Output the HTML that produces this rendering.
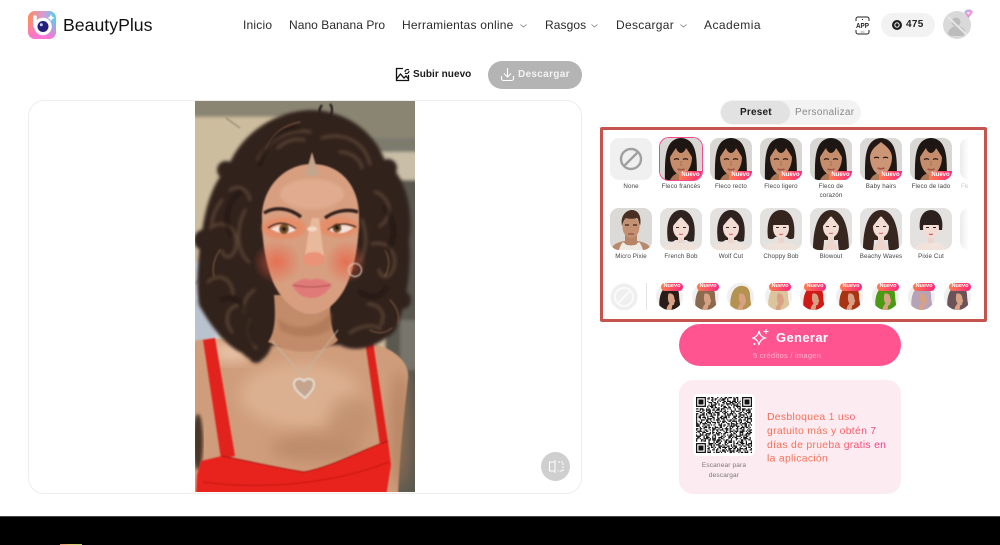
<!DOCTYPE html>
<html lang="es"><head><meta charset="utf-8"><title>BeautyPlus</title>
<style>
*{box-sizing:border-box}
html,body{margin:0;padding:0;width:1000px;height:545px;overflow:hidden;background:#fff;font-family:"Liberation Sans",sans-serif;color:#222}
.a{position:absolute;white-space:nowrap}
.nav{top:18px;font-size:12px;line-height:14px;color:#2a2a2a;letter-spacing:.25px}
.lb{width:44px;text-align:center;font-size:6.2px;line-height:8.5px;color:#444;letter-spacing:.12px;white-space:normal}
.th{position:absolute;width:42px;height:42px;border-radius:9px;overflow:hidden;background:#e4e3e1}
.th svg{display:block;width:42px;height:42px;filter:blur(.35px)}
.bd{position:absolute;right:0;bottom:0;width:23px;height:9px;border-radius:5px 0 0 0;background:linear-gradient(90deg,#ff7a4d,#f8287f);color:#fff;font-size:6px;line-height:9px;font-weight:bold;text-align:center}
.ci{position:absolute;top:283px;width:27px;height:27px;border-radius:50%;overflow:hidden;background:#f1f0ef}
.ci svg{display:block;width:27px;height:27px;filter:blur(.3px)}
.pb{position:absolute;top:283px;width:22px;height:7.5px;border-radius:4px;background:linear-gradient(90deg,#ff7a4d,#f8287f);color:#fff;font-size:5.6px;line-height:7.5px;font-weight:bold;text-align:center}
.chev{position:absolute;top:24px;width:7px;height:4px}
</style></head><body>

<svg width="0" height="0" style="position:absolute">
<defs>
<symbol id="fringe" viewBox="0 0 42 42">
<rect width="42" height="42" fill="#d9d7d4"/>
<path d="M5 42C5 22 4 1 21 0c17 1 16 22 16 42z" fill="#1e1613"/>
<path d="M10 42c2-4 5-6 8-7v-6h8v6c3 1 6 3 8 7z" fill="#ad7656"/>
<path d="M10 19c0 9 5 18 11 18s11-9 11-18S27 6 21 6 10 10 10 19z" fill="#c58d6c"/>
<path d="M9 21C9 8 16 4 21 4s12 4 12 17c-2-4-5-8-7-11-1 3-3 5-5 5s-4-2-5-5c-2 3-5 7-7 11z" fill="#1e1613"/>
<path d="M14 21.500q2.500-1.500 5 0M23 21.500q2.500-1.500 5 0" fill="none" stroke="#241510" stroke-width="1.200"/>
<path d="M21 23v5" stroke="#a96f50" stroke-width="1"/>
<path d="M17.500 31q3.500 1.500 7 0" stroke="#a5524a" stroke-width="1.500" fill="none"/>
</symbol>
<symbol id="part" viewBox="0 0 42 42">
<rect width="42" height="42" fill="#dbd9d6"/>
<path d="M5 42C5 22 4 1 21 0c17 1 16 22 16 42z" fill="#211714"/>
<path d="M10 42c2-4 5-6 8-7v-6h8v6c3 1 6 3 8 7z" fill="#b07a5b"/>
<path d="M10 19C11 10 18 7 21 4c3 3 10 6 11 15 0 9-5 18-11 18S10 28 10 19z" fill="#cb9576"/>
<path d="M14 20q2.500-1.500 5 0M23 20q2.500-1.500 5 0" fill="none" stroke="#241510" stroke-width="1.200"/>
<path d="M17.500 30q3.500 1.500 7 0" stroke="#a5524a" stroke-width="1.500" fill="none"/>
</symbol>
<symbol id="bob" viewBox="0 0 42 42">
<rect width="42" height="42" fill="#e3e2e0"/>
<path d="M2 42c2-6 12-8 19-8s17 2 19 8z" fill="#efe2db"/>
<path d="M8 33C5 14 11 2 21 2s16 12 13 31c-3 1-6 1-7-1H15c-1 2-4 2-7 1z" fill="#2f2320"/>
<rect x="18" y="26" width="6" height="9" fill="#ecd5cb"/>
<ellipse cx="21" cy="20" rx="8" ry="10.500" fill="#f3dcd4"/>
<path d="M13 18C13 9 17 7 21 6s8 3 8 12c-3-4-6-7-8-9-2 2-5 5-8 9z" fill="#2f2320"/>
<path d="M16 19.500h3M23 19.500h3" stroke="#3b2b28" stroke-width=".9"/><path d="M19 26q2 1 4 0" stroke="#cf6b72" stroke-width="1.200" fill="none"/>
</symbol>
<symbol id="bang" viewBox="0 0 42 42">
<rect width="42" height="42" fill="#e3e2e0"/>
<path d="M2 42c2-6 12-8 19-8s17 2 19 8z" fill="#efe2db"/>
<path d="M8 30C6 13 11 2 21 2s15 11 13 28c-3 2-6 1-7-1H15c-1 2-4 3-7 1z" fill="#35251f"/>
<rect x="18" y="26" width="6" height="9" fill="#ecd5cb"/>
<ellipse cx="21" cy="20" rx="8" ry="10.500" fill="#f3dcd4"/>
<path d="M13 17C13 9 16 6 21 6s8 3 8 11z" fill="#35251f"/>
<path d="M16 19.500h3M23 19.500h3" stroke="#3b2b28" stroke-width=".9"/><path d="M19 26q2 1 4 0" stroke="#cf6b72" stroke-width="1.200" fill="none"/>
</symbol>
<symbol id="long" viewBox="0 0 42 42">
<rect width="42" height="42" fill="#e3e2e0"/>
<path d="M3 42C3 24 7 2 21 2s18 22 18 40H29c-1-6-1-9-1-10H14c0 1 0 4-1 10z" fill="#37261f"/>
<path d="M14 42c1-5 3-6 4-8v-6h6v6c1 2 3 3 4 8z" fill="#efd6cc"/>
<ellipse cx="21" cy="19" rx="8" ry="10.500" fill="#f3dcd4"/>
<path d="M13 18C13 9 18 7 21 5c3 2 8 4 8 13-3-4-6-8-8-10-2 2-5 6-8 10z" fill="#37261f"/>
<path d="M16 18.500h3M23 18.500h3" stroke="#3b2b28" stroke-width=".9"/><path d="M19 25q2 1 4 0" stroke="#cf6b72" stroke-width="1.200" fill="none"/>
</symbol>
<symbol id="man" viewBox="0 0 42 42">
<rect width="42" height="42" fill="#dcdad6"/>
<path d="M1 42c1-6 8-8 13-9h14c5 1 12 3 13 9z" fill="#b88a6d"/>
<path d="M9 42c1-4 3-7 4-8l4 3h8l4-3c1 1 3 4 4 8z" fill="#eee9e2"/>
<path d="M15 36V24h12v12q-6 3-12 0z" fill="#b88466"/>
<ellipse cx="21" cy="19" rx="8.500" ry="11" fill="#c49072"/>
<path d="M12 18C10 8 16 2 22 2s10 6 8 16c-1-4-2-7-3-8-4 1-8 1-11 0-2 2-3 4-4 8z" fill="#4a3024"/>
<path d="M15 17h4M23 17h4" stroke="#3a241c" stroke-width="1.200"/><path d="M18 26h6" stroke="#8d4f40" stroke-width="1.200"/>
</symbol>
<symbol id="side" viewBox="0 0 28 28">
<rect width="28" height="28" fill="#f1f0ef"/>
<path d="M4 28C2 17 5 3 15 3c7 0 9 5 9 11 0 5 2 10 1 14z" fill="currentColor"/>
<path d="M11 28c0-4 2-5 3-7-2-2-2-7-1-10 3-1 6 1 6 5l1 3-1 1c0 2 0 3-2 3l-1 5z" fill="#d9a183"/>
</symbol>
<linearGradient id="lg" x1="0" y1="0" x2="1" y2="0"><stop offset="0" stop-color="#ff8a5c"/><stop offset=".55" stop-color="#d69ad8"/><stop offset="1" stop-color="#4fd0ee"/></linearGradient>
<linearGradient id="lgo" x1="0" y1="0" x2="0" y2="1"><stop offset=".35" stop-color="#ff6fd0" stop-opacity="0"/><stop offset="1" stop-color="#ff74d8"/></linearGradient>
<linearGradient id="lgd" x1="0" y1="0" x2="1" y2="1"><stop offset="0" stop-color="#6fd0ff"/><stop offset=".5" stop-color="#ff8fd0"/><stop offset="1" stop-color="#9f8cff"/></linearGradient>
<radialGradient id="blush" cx=".5" cy=".5" r=".5"><stop offset="0" stop-color="#ec5c40" stop-opacity=".7"/><stop offset="1" stop-color="#ec5c40" stop-opacity="0"/></radialGradient>
<filter id="s1" x="-10%" y="-10%" width="120%" height="120%"><feGaussianBlur stdDeviation=".7"/></filter>
<filter id="s2" x="-10%" y="-10%" width="120%" height="120%"><feGaussianBlur stdDeviation="1.500"/></filter>
<filter id="s3" x="-30%" y="-30%" width="160%" height="160%"><feGaussianBlur stdDeviation="7"/></filter>
</defs></svg>

<!-- logo -->
<svg class="a" style="left:28px;top:11px" width="28" height="28" viewBox="0 0 28 28">
<rect width="28" height="28" rx="7" fill="url(#lg)"/><rect width="28" height="28" rx="7" fill="url(#lgo)"/>
<path d="M7 6v9" stroke="#fff" stroke-width="3.500" stroke-linecap="round"/>
<circle cx="15" cy="15.500" r="8.800" fill="#fff"/><circle cx="15" cy="15.500" r="5.500" fill="#26207c"/><circle cx="13.300" cy="13.800" r="1.500" fill="#cfd0f5"/>
<path d="M23 3l1 2.500L26.500 7 24 8 23 10.500 22 8 19.500 7 22 5.500z" fill="#fff"/>
</svg>
<div class="a" style="left:63px;top:14px;font-size:17.700px;line-height:22px;color:#111;font-weight:500">BeautyPlus</div>

<!-- nav -->
<div class="a nav" style="left:243px;letter-spacing:.2px">Inicio</div>
<div class="a nav" style="left:289px;letter-spacing:.05px">Nano Banana Pro</div>
<div class="a nav" style="left:402px;letter-spacing:.22px">Herramientas online</div>
<svg class="chev" style="left:520px" viewBox="0 0 7 4"><path d="M.5.5l3 2.500 3-2.500" fill="none" stroke="#777" stroke-width=".8"/></svg>
<div class="a nav" style="left:545px;letter-spacing:.1px">Rasgos</div>
<svg class="chev" style="left:591px" viewBox="0 0 7 4"><path d="M.5.5l3 2.500 3-2.500" fill="none" stroke="#777" stroke-width=".8"/></svg>
<div class="a nav" style="left:616px;letter-spacing:.3px">Descargar</div>
<svg class="chev" style="left:680px" viewBox="0 0 7 4"><path d="M.5.500l3 2.500 3-2.500" fill="none" stroke="#777" stroke-width=".8"/></svg>
<div class="a nav" style="left:704px;letter-spacing:.45px">Academia</div>

<!-- app icon -->
<svg class="a" style="left:855px;top:16px" width="15" height="19" viewBox="0 0 15 19">
<path d="M1 5V3a2 2 0 0 1 2-2h9a2 2 0 0 1 2 2v2M1 14v2a2 2 0 0 0 2 2h9a2 2 0 0 0 2-2v-2" fill="none" stroke="#222" stroke-width="1"/>
<circle cx="7.500" cy="3.500" r=".6" fill="#222"/><rect x="5.500" y="15.600" width="4" height=".8" fill="#888"/>
<text x="1" y="12" textLength="13" lengthAdjust="spacingAndGlyphs" font-family="Liberation Sans" font-weight="bold" font-size="7" fill="#222">APP</text></svg>
<!-- credits -->
<div class="a" style="left:881px;top:13px;width:54px;height:24px;border-radius:12px;background:#f2f2f2"></div>
<svg class="a" style="left:892px;top:20px" width="10" height="10" viewBox="0 0 10 10"><circle cx="5" cy="5" r="5" fill="#1d1d1d"/><circle cx="5" cy="5" r="2.200" fill="none" stroke="#fff" stroke-width="1"/></svg>
<div class="a" style="left:906px;top:18px;font-size:10px;line-height:13px;font-weight:bold;color:#222;letter-spacing:.3px">475</div>
<!-- avatar -->
<svg class="a" style="left:942px;top:9px" width="32" height="31" viewBox="0 0 32 31">
<circle cx="15" cy="16" r="14" fill="#d9d9d9"/><circle cx="14" cy="13" r="4.500" fill="#bcbcbc"/><path d="M6 25c0-5 5-8 9-8s8 3 9 7l-3 3H9z" fill="#bcbcbc"/><path d="M6 8l19 18" stroke="#e6e6e6" stroke-width="2"/>
<path d="M22 3l3-2.500h3.500L31 3l-4.500 6z" fill="url(#lgd)"/><path d="M24.500 3h4l-2 3z" fill="#fff" opacity=".7"/></svg>

<!-- upload -->
<svg class="a" style="left:395px;top:67px" width="15" height="15" viewBox="0 0 15 15">
<path d="M8 1.500H1.500v12h12V8" fill="none" stroke="#111" stroke-width="1.300"/><path d="M1.500 12l4-5 3.500 4 2-2 2.500 3" fill="none" stroke="#111" stroke-width="1.300"/><path d="M10 5a2.500 2.500 0 0 1 4-2M14 4a2.500 2.500 0 0 1-4 2" fill="none" stroke="#111" stroke-width="1.100"/></svg>
<div class="a" style="left:413px;top:68px;font-size:10px;line-height:13px;font-weight:bold;color:#1a1a1a;letter-spacing:.05px">Subir nuevo</div>
<!-- download -->
<div class="a" style="left:488px;top:61px;width:94px;height:28px;border-radius:14px;background:#b4b4b4"></div>
<svg class="a" style="left:500px;top:67px" width="15" height="15" viewBox="0 0 15 15"><path d="M7.500 1v8.500M4 6.500l3.500 3.500L11 6.500M1.500 9v2.500a2 2 0 0 0 2 2h8a2 2 0 0 0 2-2V9" fill="none" stroke="#fff" stroke-width="1.100"/></svg>
<div class="a" style="left:518px;top:68px;font-size:10px;line-height:13px;font-weight:bold;color:#f3f3f3;letter-spacing:.32px">Descargar</div>

<!-- photo card -->
<div class="a" style="left:28px;top:100px;width:554px;height:394px;border:1px solid #ededed;border-radius:16px;background:#fff"></div>
<div class="a" style="left:195px;top:101px;width:220px;height:391px;overflow:hidden;background:#cdbd9f">
<svg width="220" height="391" viewBox="195 101 220 391" style="display:block">
<!-- background -->
<g filter="url(#s2)">
<rect x="185" y="95" width="240" height="405" fill="#cdbd9f"/>
<path d="M185 95h240v50l-80-4-60-24-100 0z" fill="#8a8573"/>
<rect x="360" y="138" width="65" height="14" fill="#7d7a6e"/>
<rect x="360" y="152" width="65" height="28" fill="#c9bfa8"/>
<rect x="385" y="180" width="40" height="320" fill="#5a5850"/>
<rect x="400" y="320" width="25" height="50" fill="#77746c"/>
<path d="M185 262h35v90h-35z" fill="#c9cfd8"/>
<path d="M185 300h30v50h-30z" fill="#b9c2cf"/>
</g>
<!-- body -->
<g filter="url(#s1)">
<path d="M190 342c15-5 40-3 60 0h100c10-2 22 0 28 3 18 6 32 18 30 34-4 35-8 75-10 115H190z" fill="#cf9d7b"/>
</g>
<ellipse cx="300" cy="395" rx="60" ry="32" fill="#dfb595" opacity=".8" filter="url(#s3)"/>
<ellipse cx="232" cy="352" rx="22" ry="10" fill="#ecc9ad" opacity=".9" filter="url(#s3)"/>
<ellipse cx="315" cy="448" rx="45" ry="14" fill="#b98868" opacity=".8" filter="url(#s3)"/>
<ellipse cx="350" cy="420" rx="22" ry="25" fill="#bb8a68" opacity=".6" filter="url(#s3)"/>
<ellipse cx="198" cy="442" rx="5" ry="28" fill="#4a3525" filter="url(#s2)"/>
<ellipse cx="400" cy="430" rx="10" ry="60" fill="#a87755" opacity=".6" filter="url(#s3)"/>
<!-- straps and dress -->
<g filter="url(#s1)">
<path d="M203 340l12-2 20 118-14 3z" fill="#e2211e"/>
<path d="M365 341l8 1 15 100-8 3z" fill="#dd211d"/>
<path d="M222 456c25 5 60 13 82 16 28-5 58-22 84-31l3 24-5 32H196l1-22 4-14z" fill="#e8211e"/>
<path d="M222 456c25 5 60 13 82 16 28-5 58-22 84-31" fill="none" stroke="#a5140f" stroke-width="1"/>
<path d="M203 482c60 8 130 2 186-20" fill="none" stroke="#c4120f" stroke-width="1"/>
</g>
<!-- hair -->
<g fill="#30241f" filter="url(#s2)">
<path d="M300 111c38-6 74 18 85 50 20 14 29 48 24 80 3 30-4 68-14 90-20 18-40 22-55 14h-68c-8 22-20 18-30 8-18-8-33-30-43-48-4-26 0-54 4-80 5-28 13-46 26-60 12-30 42-50 71-54z"/>
<circle cx="226" cy="170" r="9"/><circle cx="388" cy="168" r="9"/><circle cx="205" cy="240" r="11"/><circle cx="402" cy="300" r="9"/><circle cx="256" cy="356" r="7"/>
</g>
<g fill="none" stroke="#5f4839" stroke-width="3" stroke-linecap="round" filter="url(#s2)" opacity=".85">
<path d="M258 160c10-22 34-32 52-28"/><path d="M322 138c20-6 42 2 48 26"/><path d="M230 190c10-6 18 0 20 10"/>
<path d="M210 228c14-10 28 0 26 18-2 13-12 14-14 5"/><path d="M208 282c10-10 24-4 25 12"/><path d="M232 332c-8-10-6-24 6-27"/>
<path d="M375 192c15 4 20 24 5 34"/><path d="M372 244c18-5 28 14 20 28-4 7-11 6-13-2"/><path d="M368 304c10 0 19 8 13 21"/>
<path d="M245 210c-10 20-8 42 4 52"/><path d="M278 148c8-8 18-10 26-8"/><path d="M340 152c10 0 20 6 22 16"/><path d="M350 333c10-8 24-9 30-4"/><path d="M250 320c-4 10-2 22 6 28"/>
<path d="M362 220c6 16 4 30-2 42"/><path d="M222 200c-6 8-10 16-10 24"/><path d="M254 290c-8 6-12 14-10 22"/>
</g>
<g fill="none" stroke="#8a654a" stroke-width="1.400" stroke-linecap="round" filter="url(#s1)" opacity=".65">
<path d="M390 300c6 6 10 14 8 24"/><path d="M370 330c8 4 14 4 22-2"/><path d="M220 250c-6 8-8 18-6 26"/><path d="M300 122c-16 3-28 12-34 26"/><path d="M385 250c5 8 5 18 0 26"/>
</g>
<g fill="none" stroke="#15100d" stroke-width="2.500" stroke-linecap="round" filter="url(#s2)" opacity=".7">
<path d="M240 192c-13 10-17 28-9 42"/><path d="M385 208c11 15 11 32 2 42"/><path d="M222 300c10-5 20 0 22 11"/><path d="M360 292c11 7 20 6 26-4"/><path d="M298 128c-20 2-34 16-38 36"/><path d="M252 345c-4-8-5-17-2-24"/>
</g>
<path d="M322 105c-5 6-2 13 5 15 5-4 7-11 3-16" fill="none" stroke="#2b201b" stroke-width="2.500" filter="url(#s1)"/>
<path d="M240 128l-14-10M210 270c-8 6-12 8-14 14M197 240c6-3 10-3 14 0" fill="none" stroke="#3a2c24" stroke-width="1" filter="url(#s1)" opacity=".5"/>
<!-- neck -->
<path d="M274 295c2 22 1 38-6 47l10 4c20 10 50 6 60-6-8-10-9-28-7-45z" fill="#c28c6a" filter="url(#s1)"/>
<path d="M278 318c15 14 38 12 54-6l-2 18c-18 10-36 8-50 0z" fill="#a8714f" opacity=".6" filter="url(#s2)"/>
<!-- face -->
<g filter="url(#s1)">
<path d="M262 220c-1-32 22-56 50-56 30 0 48 24 47 54 0 24-4 48-12 66-8 18-22 30-36 30-15 0-30-14-38-32-7-18-11-40-11-62z" fill="#d79e80"/>
<path d="M312 152l-7 24 14 0z" fill="#c5a48c"/>
</g>
<ellipse cx="312" cy="194" rx="32" ry="15" fill="#e6b598" opacity=".6" filter="url(#s2)"/>
<ellipse cx="277" cy="262" rx="24" ry="22" fill="url(#blush)"/>
<ellipse cx="346" cy="262" rx="21" ry="22" fill="url(#blush)"/>
<ellipse cx="284" cy="228" rx="22" ry="11" fill="#e98a64" opacity=".8" filter="url(#s2)"/>
<ellipse cx="338" cy="227" rx="20" ry="10" fill="#e98a64" opacity=".8" filter="url(#s2)"/>
<g filter="url(#s1)">
<path d="M312 218c-5 16-5 30-8 42 3 7 16 8 21 0-3-14-4-28-6-42z" fill="#eebf a4" opacity="0"/>
<path d="M312 218c-5 16-5 30-8 42 3 7 16 8 21 0-3-14-4-28-6-42z" fill="#eebfa4" opacity=".8"/>
<ellipse cx="312" cy="229" rx="5" ry="2.500" fill="#f3d8c4"/>
<ellipse cx="314" cy="259" rx="11" ry="7" fill="#ea8f74" opacity=".9"/>
<path d="M264 213c11-7 26-5 37 4" fill="none" stroke="#35241c" stroke-width="3.400"/>
<path d="M325 218c8-6 21-10 33-6" fill="none" stroke="#35241c" stroke-width="3.400"/>
<path d="M271 229q12-8 25 1-12 7-25-1z" fill="#f4e3dd"/><path d="M329 230q12-8 24-2-11 9-24 2z" fill="#f4e3dd"/>
<circle cx="284" cy="229" r="5" fill="#74502a"/><circle cx="284" cy="229" r="2" fill="#1f130c"/>
<circle cx="337" cy="228" r="4.600" fill="#74502a"/><circle cx="337" cy="228" r="2" fill="#1f130c"/>
<path d="M268 228q14-10 28 1M328 230q12-10 28-3" fill="none" stroke="#2a1a12" stroke-width="1.300"/>
<path d="M292 285c6-4 11-7 16-6 3 1 4 1 6 0 6-1 12 2 18 6-6 9-13 13-21 13s-14-4-19-13z" fill="#e07a78"/>
<path d="M293 285q18 4 37 0" fill="none" stroke="#a84a4a" stroke-width="1"/>
<circle cx="355" cy="270" r="6.500" fill="none" stroke="#d4c8b5" stroke-width="1.200"/>
<path d="M272 341l31 35 35-46" fill="none" stroke="#c3b6a6" stroke-width="1"/>
<path d="M305 398c-6-5-11-9-11-14s6-7 10-3c4-4 10-2 10 3s-4 9-9 14z" fill="#c5a48e" stroke="#e5dfd6" stroke-width="1.800"/>
</g>
</svg></div>
<!-- compare btn -->
<div class="a" style="left:541px;top:452px;width:29px;height:29px;border-radius:50%;background:#cfcfcf"></div>
<svg class="a" style="left:548px;top:460px" width="16" height="13" viewBox="0 0 16 13"><path d="M7 2H1.500v9H7M7 0v13" fill="none" stroke="#fff" stroke-width="1"/><path d="M10 2h5v9h-5" fill="none" stroke="#fff" stroke-width="1" stroke-dasharray="2 1"/></svg>

<!-- tabs -->
<div class="a" style="left:720px;top:100px;width:141px;height:25px;border-radius:12.500px;background:#f3f3f3"></div>
<div class="a" style="left:721px;top:101px;width:69px;height:23px;border-radius:11.500px;background:#e2e2e2"></div>
<div class="a" style="left:740px;top:106px;font-size:10px;line-height:13px;font-weight:bold;color:#1b1b1b;letter-spacing:.2px">Preset</div>
<div class="a" style="left:795px;top:106px;font-size:10px;line-height:13px;color:#8a8a8a;letter-spacing:.32px">Personalizar</div>

<!-- red frame -->
<div class="a" style="left:600px;top:127px;width:387px;height:195px;border:3px solid #c5534e;border-radius:2px"></div>

<!-- Row 1 -->
<div class="th" style="left:610px;top:138px;background:#f0f0f0"><svg viewBox="0 0 42 42"><circle cx="21" cy="21" r="10" fill="none" stroke="#a0a0a0" stroke-width="2.400"/><path d="M14 28L28 14" stroke="#a0a0a0" stroke-width="2.400"/></svg></div>
<div class="th" style="left:660px;top:138px;box-shadow:0 0 0 1px #f5488c"><svg><use href="#fringe"/></svg><div class="bd">Nuevo</div></div>
<div class="th" style="left:710px;top:138px"><svg><use href="#fringe"/></svg><div class="bd">Nuevo</div></div>
<div class="th" style="left:760px;top:138px"><svg><use href="#fringe"/></svg><div class="bd">Nuevo</div></div>
<div class="th" style="left:810px;top:138px"><svg><use href="#fringe"/></svg><div class="bd">Nuevo</div></div>
<div class="th" style="left:860px;top:138px"><svg><use href="#part"/></svg><div class="bd">Nuevo</div></div>
<div class="th" style="left:910px;top:138px"><svg><use href="#fringe"/></svg><div class="bd">Nuevo</div></div>
<div class="th" style="left:960px;top:138px;width:9px;border-radius:9px 0 0 9px;background:linear-gradient(90deg,#ececec,#fff)"></div>

<div class="a lb" style="left:609px;top:183px">None</div>
<div class="a lb" style="left:659px;top:183px">Fleco francés</div>
<div class="a lb" style="left:709px;top:183px">Fleco recto</div>
<div class="a lb" style="left:759px;top:183px">Fleco ligero</div>
<div class="a lb" style="left:809px;top:183px">Fleco de corazón</div>
<div class="a lb" style="left:859px;top:183px">Baby hairs</div>
<div class="a lb" style="left:909px;top:183px">Fleco de lado</div>
<div class="a" style="left:961px;top:183px;font-size:6.200px;line-height:8.500px;color:#ccc;width:7px;overflow:hidden">Fleco</div>

<!-- Row 2 -->
<div class="th" style="left:610px;top:208px"><svg><use href="#man"/></svg></div>
<div class="th" style="left:660px;top:208px"><svg><use href="#bob"/></svg></div>
<div class="th" style="left:710px;top:208px"><svg><use href="#bob"/></svg></div>
<div class="th" style="left:760px;top:208px"><svg><use href="#bang"/></svg></div>
<div class="th" style="left:810px;top:208px"><svg><use href="#long"/></svg></div>
<div class="th" style="left:860px;top:208px"><svg><use href="#long"/></svg></div>
<div class="th" style="left:910px;top:208px"><svg viewBox="0 0 42 42"><rect width="42" height="42" fill="#e3e2e0"/><path d="M4 42c2-6 10-8 17-8s15 2 17 8z" fill="#f1e3dc"/><rect x="18" y="26" width="6" height="9" fill="#ecd5cb"/><path d="M10 22C8 9 14 2 21 2s13 7 11 20z" fill="#2d211f"/><ellipse cx="21" cy="20" rx="8" ry="10.500" fill="#f3dcd4"/><path d="M13 17C13 9 16 6 21 6s8 3 8 11z" fill="#2d211f"/><path d="M16 19.500h3M23 19.500h3" stroke="#2d211f" stroke-width="1"/><path d="M19 26q2 1 4 0" stroke="#c2555e" stroke-width="1.200" fill="none"/></svg></div>
<div class="th" style="left:960px;top:208px;width:9px;border-radius:9px 0 0 9px;background:linear-gradient(90deg,#ececec,#fff)"></div>

<div class="a lb" style="left:609px;top:253px">Micro Pixie</div>
<div class="a lb" style="left:659px;top:253px">French Bob</div>
<div class="a lb" style="left:709px;top:253px">Wolf Cut</div>
<div class="a lb" style="left:759px;top:253px">Choppy Bob</div>
<div class="a lb" style="left:809px;top:253px">Blowout</div>
<div class="a lb" style="left:859px;top:253px">Beachy Waves</div>
<div class="a lb" style="left:909px;top:253px">Pixie Cut</div>

<!-- Row 3 -->
<svg class="a" style="left:610px;top:283px" width="28" height="28" viewBox="0 0 28 28"><circle cx="14" cy="14" r="13.500" fill="#efefef"/><circle cx="14" cy="14" r="9" fill="none" stroke="#fafafa" stroke-width="2"/><path d="M8 20L20 8" stroke="#fafafa" stroke-width="2"/></svg>
<div class="a" style="left:646px;top:283px;width:1px;height:27px;background:#e4e4e4"></div>
<div class="ci" style="left:656px;color:#2a1c18"><svg><use href="#side"/></svg></div>
<div class="ci" style="left:692px;color:#8b6a50"><svg><use href="#side"/></svg></div>
<div class="ci" style="left:727px;color:#b4924f"><svg><use href="#side"/></svg></div>
<div class="ci" style="left:765px;color:#dcc49c"><svg><use href="#side"/></svg></div>
<div class="ci" style="left:800px;color:#cf1a17"><svg><use href="#side"/></svg></div>
<div class="ci" style="left:836px;color:#a83414"><svg><use href="#side"/></svg></div>
<div class="ci" style="left:872px;color:#4c9a13"><svg><use href="#side"/></svg></div>
<div class="ci" style="left:908px;color:#b7a3b8"><svg><use href="#side"/></svg></div>
<div class="ci" style="left:944px;color:#6a5258"><svg><use href="#side"/></svg></div>
<div class="pb" style="left:661px">Nuevo</div>
<div class="pb" style="left:697px">Nuevo</div>
<div class="pb" style="left:769px">Nuevo</div>
<div class="pb" style="left:804px">Nuevo</div>
<div class="pb" style="left:840px">Nuevo</div>
<div class="pb" style="left:877px">Nuevo</div>
<div class="pb" style="left:913px">Nuevo</div>
<div class="pb" style="left:949px">Nuevo</div>

<!-- Generate -->
<div class="a" style="left:679px;top:324px;width:222px;height:42px;border-radius:21px;background:#ff5490"></div>
<svg class="a" style="left:752px;top:328px" width="18" height="19" viewBox="0 0 18 19"><path d="M7 3c.8 4 2.500 6 6 7-3.500 1-5.200 3-6 7-.8-4-2.500-6-6-7 3.500-1 5.200-3 6-7z" fill="none" stroke="#fff" stroke-width="1.200"/><path d="M14 1v5M11.500 3.500h5" stroke="#fff" stroke-width="1.100"/><circle cx="2.500" cy="16" r="1" fill="#fff"/></svg>
<div class="a" style="left:776px;top:330px;font-size:13px;line-height:16px;font-weight:bold;color:#fff;letter-spacing:.35px">Generar</div>
<div class="a" style="left:753px;top:351px;font-size:7.500px;line-height:10px;color:#ffb3ce;letter-spacing:.25px">5 créditos / imagen</div>

<!-- Promo -->
<div class="a" style="left:679px;top:380px;width:222px;height:114px;border-radius:14px;background:#fdebf2"></div>
<div class="a" style="left:693px;top:394px;width:62px;height:62px;border-radius:5px;background:#fff"></div>
<svg class="a" style="left:696px;top:397px" width="56" height="56" viewBox="0 0 45 45">
<g stroke="#111" stroke-width="1" fill="none">
<path stroke-dasharray="1 2 2 1 3 1 1 1 2 3 1 2" d="M0 .5h45"/><path stroke-dasharray="2 1 1 3 1 1 4 2 1 1 2" stroke-dashoffset="2" d="M0 1.500h45"/><path stroke-dasharray="1 1 3 2 1 4 2 1 1 2" d="M0 2.500h45"/><path stroke-dasharray="3 1 1 1 2 2 1 3 1" stroke-dashoffset="1" d="M0 3.500h45"/><path stroke-dasharray="1 3 2 1 1 2 3 1 2 1" d="M0 4.500h45"/><path stroke-dasharray="2 2 1 1 3 1 1 4 1" stroke-dashoffset="3" d="M0 5.500h45"/><path stroke-dasharray="1 1 2 3 1 2 1 1 4 2" d="M0 6.500h45"/><path stroke-dasharray="4 1 1 2 2 1 3 1 1" d="M0 7.500h45"/><path stroke-dasharray="1 2 1 1 3 3 1 2 2" stroke-dashoffset="2" d="M0 8.500h45"/><path stroke-dasharray="2 1 3 2 1 1 1 3 1 2" d="M0 9.500h45"/><path stroke-dasharray="1 3 1 1 2 1 4 1 2" stroke-dashoffset="1" d="M0 10.500h45"/><path stroke-dasharray="3 2 1 2 1 1 2 3 1" d="M0 11.500h45"/><path stroke-dasharray="1 1 1 4 2 1 1 2 3" stroke-dashoffset="4" d="M0 12.500h45"/><path stroke-dasharray="2 3 2 1 1 1 3 1 1 2" d="M0 13.500h45"/><path stroke-dasharray="1 2 4 1 1 3 1 1 2" d="M0 14.500h45"/><path stroke-dasharray="3 1 2 2 1 2 1 1 3" stroke-dashoffset="2" d="M0 15.500h45"/><path stroke-dasharray="1 1 2 1 3 1 1 3 2 2" d="M0 16.500h45"/><path stroke-dasharray="2 2 1 3 1 1 4 1 1" stroke-dashoffset="1" d="M0 17.500h45"/><path stroke-dasharray="1 3 3 1 2 1 1 2 1" d="M0 18.500h45"/><path stroke-dasharray="4 1 1 1 1 3 2 2 1" stroke-dashoffset="3" d="M0 19.500h45"/><path stroke-dasharray="1 2 2 2 1 1 3 1 3" d="M0 20.500h45"/><path stroke-dasharray="2 1 1 1 4 2 1 3 1" d="M0 21.500h45"/><path stroke-dasharray="1 1 3 3 1 2 2 1 1" stroke-dashoffset="2" d="M0 22.500h45"/><path stroke-dasharray="3 2 1 1 2 1 1 4 1" d="M0 23.500h45"/><path stroke-dasharray="1 3 1 2 3 1 2 1 1" stroke-dashoffset="1" d="M0 24.500h45"/><path stroke-dasharray="2 1 2 1 1 3 1 2 3" d="M0 25.500h45"/><path stroke-dasharray="1 2 1 3 2 2 1 1 2" d="M0 26.500h45"/><path stroke-dasharray="3 1 4 1 1 1 2 3 1" stroke-dashoffset="3" d="M0 27.500h45"/><path stroke-dasharray="1 1 1 2 3 3 1 1 2" d="M0 28.500h45"/><path stroke-dasharray="2 3 1 1 1 2 4 1 1" stroke-dashoffset="2" d="M0 29.500h45"/><path stroke-dasharray="1 2 3 1 2 1 1 3 2" d="M0 30.500h45"/><path stroke-dasharray="4 2 1 1 2 3 1 1 1" d="M0 31.500h45"/><path stroke-dasharray="1 1 2 3 1 1 3 2 1" stroke-dashoffset="1" d="M0 32.500h45"/><path stroke-dasharray="2 1 1 2 4 1 1 1 3" d="M0 33.500h45"/><path stroke-dasharray="1 3 2 1 1 2 2 1 3" d="M0 34.500h45"/><path stroke-dasharray="3 1 1 3 1 1 2 2 1" stroke-dashoffset="4" d="M0 35.500h45"/><path stroke-dasharray="1 2 1 1 3 2 1 3 1" d="M0 36.500h45"/><path stroke-dasharray="2 2 3 1 1 1 4 1 1" d="M0 37.500h45"/><path stroke-dasharray="1 1 1 3 2 1 1 2 3" stroke-dashoffset="2" d="M0 38.500h45"/><path stroke-dasharray="3 3 1 1 2 2 1 1 1" d="M0 39.500h45"/><path stroke-dasharray="1 1 2 2 1 4 1 1 2" stroke-dashoffset="1" d="M0 40.500h45"/><path stroke-dasharray="2 1 1 1 3 1 2 3 1" d="M0 41.500h45"/><path stroke-dasharray="1 2 3 2 1 1 1 2 2" d="M0 42.500h45"/><path stroke-dasharray="4 1 2 1 1 3 1 1 1" stroke-dashoffset="3" d="M0 43.500h45"/><path stroke-dasharray="1 3 1 1 2 1 3 2 1" d="M0 44.500h45"/>
</g>
<g fill="#fff"><rect width="9" height="9"/><rect x="36" width="9" height="9"/><rect y="36" width="9" height="9"/></g>
<g fill="none" stroke="#111" stroke-width="1"><rect x=".5" y=".5" width="7" height="7"/><rect x="37.500" y=".5" width="7" height="7"/><rect x=".5" y="37.500" width="7" height="7"/></g>
<g fill="#111"><rect x="2" y="2" width="4" height="4"/><rect x="39" y="2" width="4" height="4"/><rect x="2" y="39" width="4" height="4"/></g>
</svg>
<div class="a" style="left:690px;top:461px;width:68px;text-align:center;white-space:normal;font-size:6.500px;line-height:10px;color:#777;letter-spacing:.15px">Escanear para descargar</div>
<svg class="a" style="left:766px;top:406px" width="126" height="62" viewBox="0 0 126 62" font-family="Liberation Sans" font-size="10.400" letter-spacing=".3">
<defs><linearGradient id="tg" gradientUnits="userSpaceOnUse" x1="0" y1="0" x2="120" y2="50"><stop offset="0" stop-color="#f5664f"/><stop offset=".5" stop-color="#f5795a"/><stop offset="1" stop-color="#f52f8a"/></linearGradient></defs>
<g fill="url(#tg)">
<text x="1" y="14">Desbloquea 1 uso</text>
<text x="1" y="28">gratuito más y obtén 7</text>
<text x="1" y="42">días de prueba gratis en</text>
<text x="1" y="55.500">la aplicación</text>
</g>
</svg>

<!-- footer -->
<div class="a" style="left:0;top:516px;width:1000px;height:29px;background:#000;border-top:1px solid #444"></div>
<div class="a" style="left:60px;top:544px;width:22px;height:1px;background:linear-gradient(90deg,#e08a70,#e0c86a,#b5d070)"></div>
</body></html>
